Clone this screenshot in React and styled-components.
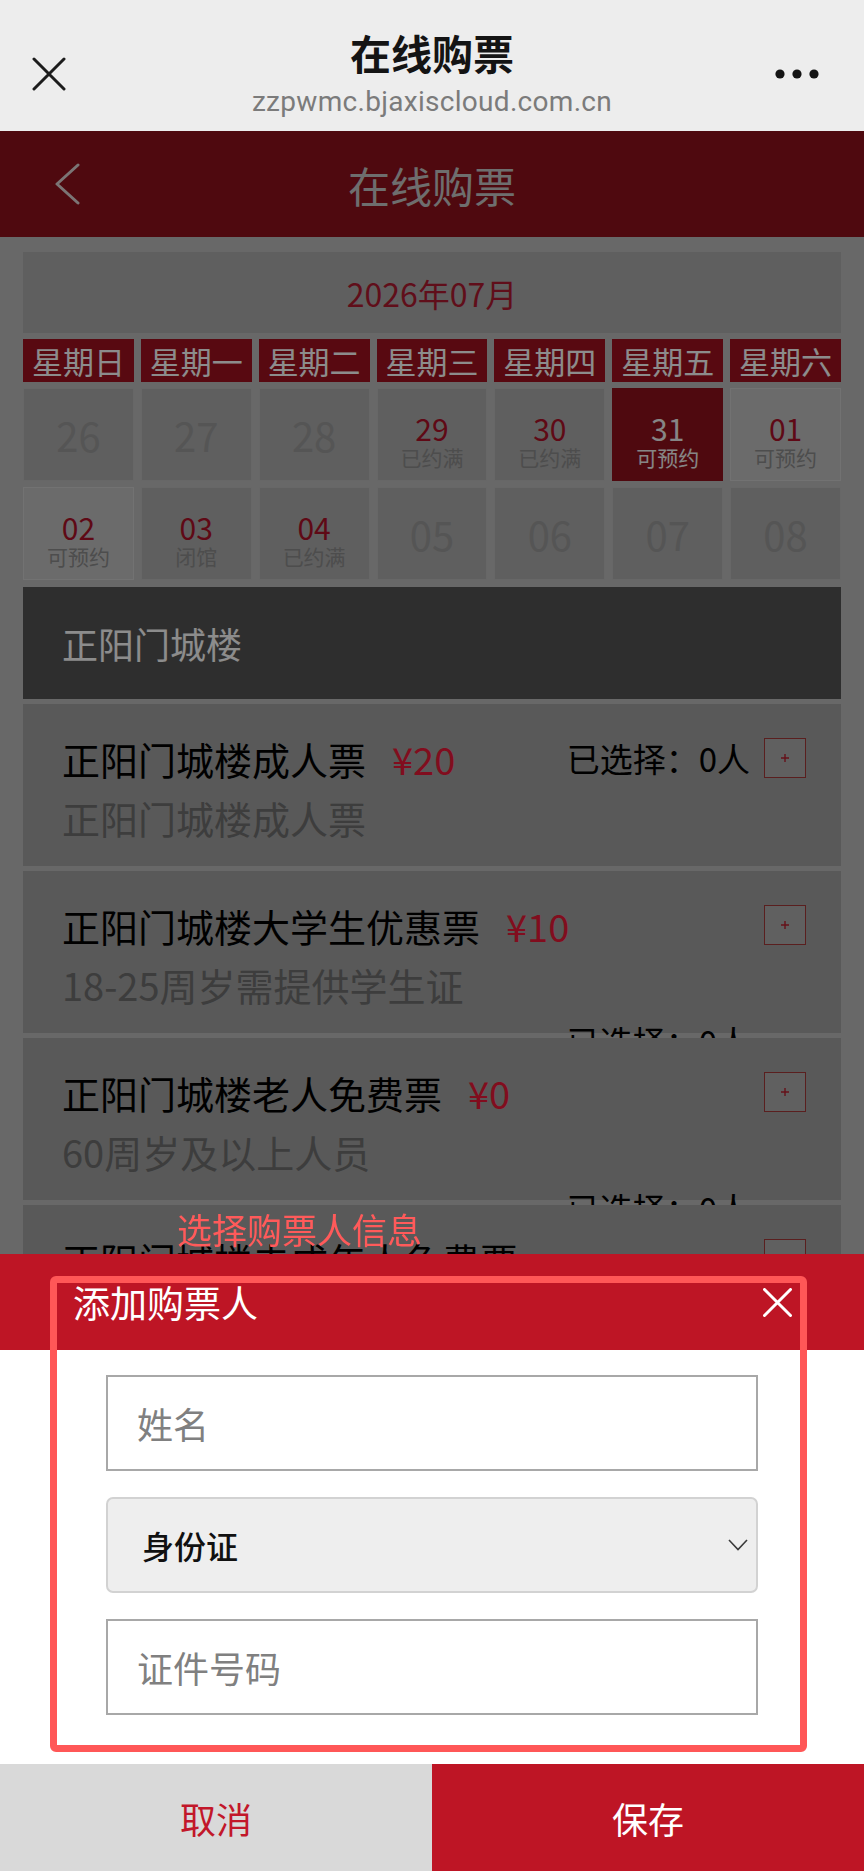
import React from "react";
import styled, { createGlobalStyle, css } from "styled-components";

const CJK = `"Noto Sans CJK SC", "Noto Sans", sans-serif`;

const GlobalStyle = createGlobalStyle`
  html, body { margin: 0; padding: 0; overflow: hidden; }
  body { background: #bdbdbd; font-family: ${CJK}; }
  * { box-sizing: border-box; }
`;

/* ---------- browser chrome ---------- */
const BrowserBar = styled.header`
  height: 131px;
  background: #ededed;
  display: grid;
  grid-template-columns: 1fr auto 1fr;
`;
const BarLeft = styled.div`
  padding: 57px 0 0 32px;
`;
const BarRight = styled.div`
  display: flex;
  justify-content: flex-end;
  padding: 69px 45px 0 0;
`;
const BarCenter = styled.div`
  padding-top: 29px;
  text-align: center;
`;
const BarTitle = styled.div`
  font-size: 41px;
  line-height: 46px;
  font-weight: 700;
  color: #141414;
`;
const BarUrl = styled.div`
  margin-top: 11px;
  font-family: Roboto, "Liberation Sans", sans-serif;
  font-size: 28px;
  line-height: 32px;
  letter-spacing: 0.3px;
  color: #7b7b7b;
`;

/* ---------- app header ---------- */
const AppHeader = styled.div`
  height: 106px;
  background: #91121d;
  display: grid;
  grid-template-columns: 120px 1fr 120px;
  align-items: center;
`;
const BackButton = styled.div`
  padding-left: 55px;
  display: flex;
  align-items: center;
`;
const AppTitle = styled.h1`
  margin: 0;
  text-align: center;
  font-size: 42px;
  font-weight: 400;
  color: #c8c8c8;
`;

/* ---------- calendar ---------- */
const Content = styled.main`
  padding: 15px 23px 40px;
`;
const MonthBar = styled.div`
  height: 81px;
  background: #adadad;
  display: flex;
  align-items: center;
  justify-content: center;
  font-size: 32px;
  color: #b01a30;
`;
const CalendarGrid = styled.div`
  margin-top: 6px;
  display: grid;
  grid-template-columns: repeat(7, 1fr);
  column-gap: 7px;
  row-gap: 6px;
`;
const WeekdayCell = styled.div`
  height: 43px;
  background: #a0121f;
  color: #ffffff;
  font-size: 31px;
  line-height: 43px;
  text-align: center;
  white-space: nowrap;
`;

const dayVariants = {
  off: css`
    background: #adadad;
    border-color: #bcbcbc;
  `,
  full: css`
    background: #adadad;
    border-color: #bcbcbc;
  `,
  open: css`
    background: #c3c3c3;
    border-color: #d0d0d0;
  `,
  selected: css`
    background: #91121d;
    border-color: #91121d;
  `,
};

const DayCell = styled.div`
  height: 93px;
  border: 1px solid;
  display: flex;
  flex-direction: column;
  align-items: center;
  justify-content: center;
  padding-top: ${(p) => (p.$variant === "off" ? 0 : 13)}px;
  ${(p) => dayVariants[p.$variant]}
`;
const DayNum = styled.div`
  font-size: ${(p) => (p.$big ? 40 : 30)}px;
  line-height: ${(p) => (p.$big ? 44 : 32)}px;
  color: ${(p) =>
    p.$big ? "#9b9b9b" : p.$light ? "#f4f4f4" : "#ad1228"};
`;
const DayLabel = styled.div`
  font-size: 21px;
  line-height: 26px;
  color: ${(p) => (p.$light ? "#f4f4f4" : "#8c8c8c")};
`;

/* ---------- tickets ---------- */
const SectionHead = styled.div`
  margin-top: 7px;
  height: 112px;
  background: #545454;
  color: #ffffff;
  font-size: 36px;
  padding-left: 39px;
  display: flex;
  align-items: center;
`;
const TicketList = styled.div`
  margin-top: 5px;
  display: flex;
  flex-direction: column;
  gap: 5px;
`;
const TicketCard = styled.div`
  position: relative;
  height: 162px;
  background: #a2a2a2;
  padding: 24px 35px 0 39px;
`;
const HeadRow = styled.div`
  display: flex;
  align-items: center;
  height: 60px;
`;
const TicketName = styled.span`
  font-size: 38px;
  color: #000;
  white-space: nowrap;
`;
const Price = styled.span`
  margin-left: 26px;
  font-size: 38px;
  color: #ec1937;
  white-space: nowrap;
`;
const Spacer = styled.span`
  flex: 1;
`;
const Picked = styled.span`
  font-size: 33px;
  color: #000;
  margin-right: 14px;
  white-space: nowrap;
`;
const PlusBox = styled.span`
  flex: none;
  width: 42px;
  height: 40px;
  border: 1px solid #a43a3a;
  background: #b0b0b0;
  display: flex;
  align-items: center;
  justify-content: center;
`;
const SubLine = styled.div`
  font-size: 38px;
  line-height: 60px;
  color: #6f6f6f;
  white-space: nowrap;
`;
const WrappedPicked = styled.div`
  text-align: right;
  padding-right: 56px;
  font-size: 33px;
  line-height: 52px;
  color: #000;
  white-space: nowrap;
`;

/* ---------- mask & sheet ---------- */
const Mask = styled.div`
  position: fixed;
  top: 131px;
  left: 0;
  right: 0;
  bottom: 0;
  background: rgba(0, 0, 0, 0.45);
  z-index: 10;
`;
const Sheet = styled.section`
  position: fixed;
  left: 0;
  right: 0;
  bottom: 0;
  z-index: 20;
  display: flex;
  flex-direction: column;
`;
const SheetHead = styled.div`
  height: 96px;
  background: #be1525;
  display: flex;
  align-items: center;
  justify-content: space-between;
  padding: 0 72px 0 73px;
`;
const SheetTitle = styled.h2`
  margin: 0;
  font-size: 37px;
  font-weight: 400;
  color: #fff;
`;
const CloseButton = styled.button`
  border: none;
  background: none;
  padding: 0;
  display: flex;
`;
const SheetBody = styled.div`
  background: #fff;
  padding: 25px 106px 49px;
  display: flex;
  flex-direction: column;
  gap: 26px;
`;
const TextField = styled.input`
  display: block;
  width: 100%;
  height: 96px;
  border: 2px solid #a8a8a8;
  border-radius: 0;
  padding: 0 0 0 29px;
  font-family: ${CJK};
  font-size: 36px;
  color: #333;
  background: #fff;
  outline: none;
  &::placeholder {
    color: #808080;
  }
`;
const SelectWrap = styled.div`
  position: relative;
`;
const SelectBox = styled.select`
  display: block;
  width: 100%;
  height: 96px;
  appearance: none;
  -webkit-appearance: none;
  background: #eeeeee;
  border: 2px solid #d2d2d2;
  border-radius: 7px;
  padding: 0 0 0 34px;
  font-family: ${CJK};
  font-size: 32px;
  font-weight: 500;
  color: #111;
  outline: none;
`;
const SelectChevron = styled.svg`
  position: absolute;
  right: 10px;
  top: 42px;
  pointer-events: none;
`;
const Footer = styled.div`
  height: 107px;
  display: grid;
  grid-template-columns: 1fr 1fr;
`;
const FooterButton = styled.button`
  border: none;
  margin: 0;
  font-family: ${CJK};
  font-size: 36px;
  background: ${(p) => (p.$primary ? "#be1525" : "#d9d9d9")};
  color: ${(p) => (p.$primary ? "#ffffff" : "#c2172a")};
`;

/* ---------- annotation ---------- */
const CalloutBox = styled.div`
  position: fixed;
  left: 50px;
  top: 1276px;
  width: 757px;
  height: 476px;
  border: 7px solid #ff5757;
  border-radius: 6px;
  z-index: 30;
  pointer-events: none;
`;
const CalloutLabel = styled.div`
  position: fixed;
  left: 177px;
  top: 1204px;
  font-size: 35px;
  line-height: 50px;
  color: #ff5a5a;
  z-index: 30;
`;

/* ---------- data ---------- */
const weekdays = ["星期日", "星期一", "星期二", "星期三", "星期四", "星期五", "星期六"];
const days = [
  { n: "26", v: "off" },
  { n: "27", v: "off" },
  { n: "28", v: "off" },
  { n: "29", v: "full", l: "已约满" },
  { n: "30", v: "full", l: "已约满" },
  { n: "31", v: "selected", l: "可预约" },
  { n: "01", v: "open", l: "可预约" },
  { n: "02", v: "open", l: "可预约" },
  { n: "03", v: "full", l: "闭馆" },
  { n: "04", v: "full", l: "已约满" },
  { n: "05", v: "off" },
  { n: "06", v: "off" },
  { n: "07", v: "off" },
  { n: "08", v: "off" },
];
const tickets = [
  { name: "正阳门城楼成人票", price: "¥20", sub: "正阳门城楼成人票", inline: true },
  { name: "正阳门城楼大学生优惠票", price: "¥10", sub: "18-25周岁需提供学生证" },
  { name: "正阳门城楼老人免费票", price: "¥0", sub: "60周岁及以上人员" },
  { name: "正阳门城楼未成年人免费票", sub: "18周岁以下人员" },
];

const Plus = () => (
  <PlusBox>
    <svg width="10" height="10" viewBox="0 0 10 10">
      <path d="M5 1v8M1 5h8" stroke="#b81e2e" strokeWidth="1.4" />
    </svg>
  </PlusBox>
);

export default function App() {
  return (
    <>
      <GlobalStyle />
      <BrowserBar>
        <BarLeft>
          <svg width="34" height="34" viewBox="0 0 34 34">
            <path d="M2 2L32 32M32 2L2 32" stroke="#1c1c1c" strokeWidth="3" strokeLinecap="round" />
          </svg>
        </BarLeft>
        <BarCenter>
          <BarTitle>在线购票</BarTitle>
          <BarUrl>zzpwmc.bjaxiscloud.com.cn</BarUrl>
        </BarCenter>
        <BarRight>
          <svg width="44" height="10" viewBox="0 0 44 10">
            <circle cx="5" cy="5" r="4.6" fill="#141414" />
            <circle cx="22" cy="5" r="4.6" fill="#141414" />
            <circle cx="39" cy="5" r="4.6" fill="#141414" />
          </svg>
        </BarRight>
      </BrowserBar>

      <AppHeader>
        <BackButton>
          <svg width="26" height="42" viewBox="0 0 26 42">
            <path d="M23 2L2 21L23 40" fill="none" stroke="#e0d6d6" strokeWidth="3" strokeLinecap="round" strokeLinejoin="round" />
          </svg>
        </BackButton>
        <AppTitle>在线购票</AppTitle>
        <span />
      </AppHeader>

      <Content>
        <MonthBar>2026年07月</MonthBar>
        <CalendarGrid>
          {weekdays.map((w) => (
            <WeekdayCell key={w}>{w}</WeekdayCell>
          ))}
          {days.map((d) => (
            <DayCell key={d.n} $variant={d.v}>
              <DayNum $big={d.v === "off"} $light={d.v === "selected"}>
                {d.n}
              </DayNum>
              {d.l && <DayLabel $light={d.v === "selected"}>{d.l}</DayLabel>}
            </DayCell>
          ))}
        </CalendarGrid>

        <SectionHead>正阳门城楼</SectionHead>
        <TicketList>
          {tickets.map((t) => (
            <TicketCard key={t.name}>
              <HeadRow>
                <TicketName>{t.name}</TicketName>
                {t.price && <Price>{t.price}</Price>}
                <Spacer />
                {t.inline && <Picked>已选择：0人</Picked>}
                <Plus />
              </HeadRow>
              <SubLine>{t.sub}</SubLine>
              {!t.inline && <WrappedPicked>已选择：0人</WrappedPicked>}
            </TicketCard>
          ))}
        </TicketList>
      </Content>

      <Mask />

      <Sheet>
        <SheetHead>
          <SheetTitle>添加购票人</SheetTitle>
          <CloseButton aria-label="关闭">
            <svg width="29" height="29" viewBox="0 0 29 29">
              <path d="M1.5 1.5L27.5 27.5M27.5 1.5L1.5 27.5" stroke="#ffffff" strokeWidth="3" strokeLinecap="round" />
            </svg>
          </CloseButton>
        </SheetHead>
        <SheetBody>
          <TextField placeholder="姓名" />
          <SelectWrap>
            <SelectBox defaultValue="id">
              <option value="id">身份证</option>
              <option value="passport">护照</option>
            </SelectBox>
            <SelectChevron width="20" height="12" viewBox="0 0 20 12">
              <path d="M1 1L10 10.5L19 1" fill="none" stroke="#3a3a3a" strokeWidth="1.6" />
            </SelectChevron>
          </SelectWrap>
          <TextField placeholder="证件号码" />
        </SheetBody>
        <Footer>
          <FooterButton>取消</FooterButton>
          <FooterButton $primary>保存</FooterButton>
        </Footer>
      </Sheet>

      <CalloutLabel>选择购票人信息</CalloutLabel>
      <CalloutBox />
    </>
  );
}
